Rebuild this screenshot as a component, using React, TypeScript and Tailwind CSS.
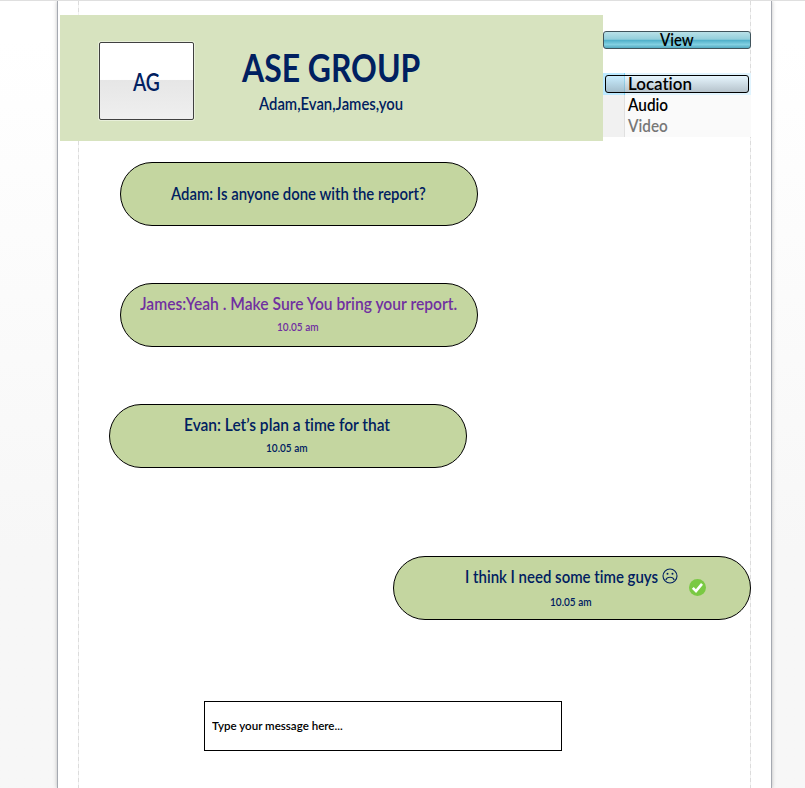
import { useLayoutEffect, useRef, useState } from "react";
import clsx from "clsx";

/** One line of lettering, condensed or widened to fill its box. */
function Line({ text, className }: { text: string; className: string }) {
  const box = useRef<HTMLDivElement>(null);
  const span = useRef<HTMLSpanElement>(null);
  const [scale, setScale] = useState(1);
  useLayoutEffect(() => {
    if (box.current && span.current) {
      setScale(box.current.clientWidth / span.current.offsetWidth);
    }
  }, [text]);
  return (
    <div ref={box} className={clsx("shrink-0 whitespace-nowrap", className)}>
      <span ref={span} className="inline-block origin-left" style={{ transform: `scaleX(${scale})` }}>
        {text}
      </span>
    </div>
  );
}

const bubble =
  "flex h-16 w-[358px] flex-col items-center rounded-[32px] border border-black bg-[#c4d6a0] pr-0.5 text-[#002060]";

function Sad() {
  return (
    <svg className="size-4" viewBox="0 0 16 16" fill="none" stroke="#002060">
      <circle cx="8" cy="8" r="7" strokeWidth="1.1" />
      <circle cx="5.5" cy="5.8" r="1" fill="#002060" stroke="none" />
      <circle cx="10.5" cy="5.8" r="1" fill="#002060" stroke="none" />
      <path d="M3.8 12C5 8.4 11 8.4 12.2 12" strokeWidth="1.1" />
    </svg>
  );
}

function Check() {
  return (
    <svg className="size-[17px]" viewBox="0 0 17 17">
      <circle cx="8.5" cy="8.5" r="8.5" fill="#7ac943" />
      <path d="M3.8 8.9 7 12.1 13 4.9" fill="none" stroke="#fff" strokeWidth="2.6" />
    </svg>
  );
}

const rail =
  "absolute inset-y-0 w-px bg-[repeating-linear-gradient(to_bottom,#dcdcdc_0_4px,#f1f1f1_4px_7px)]";

export default function App() {
  return (
    <div className="flex h-[788px] w-[805px] justify-start overflow-hidden border-t border-[#dfdfdf] bg-linear-to-b from-white from-5% to-[#f7f7f7] to-70% pl-[57px] font-['Lato',sans-serif] font-semibold [font-variant-ligatures:none]">
      <main className="relative h-full w-[715px] shrink-0 border-x border-[#a5a9b1] bg-white shadow-[0_0_4px_rgba(0,0,0,0.25)]">
        <div className={clsx(rail, "left-5")} />
        <div className={clsx(rail, "left-[692px]")} />
        <div className="relative">
          <div className="flex pt-3.5 pl-0.5">
            <header className="flex h-[126px] w-[543px] bg-[#d7e3bf] pt-[27px] pl-[39px] text-[#002060]">
              <div className="flex h-[78px] w-[95px] justify-center rounded-[2px] border border-[#404040] bg-[linear-gradient(#fff_0_48%,#e6e6e6_49%,#efefef_100%)] pt-[21px] pr-px ring-1 ring-[#e8efda]">
                <Line text="AG" className="w-[27px] text-[25px] leading-[34px]" />
              </div>
              <div className="ml-12 flex flex-col items-center">
                <h1>
                  <Line text="ASE GROUP" className="w-[178px] text-[38px] leading-[50px] font-bold" />
                </h1>
                <Line text="Adam,Evan,James,you" className="w-[144px] text-[17px] leading-6" />
              </div>
            </header>
            <nav className="w-[148px] pt-4 text-[18px] text-black">
              <button className="flex h-[18px] w-full justify-center rounded-[3px] border border-[#40545c] bg-[linear-gradient(#b9e1e8_0%,#92cedb_46%,#4caec8_50%,#82d0e2_78%,#53abc1_100%)] leading-[14px]">
                <Line text="View" className="w-[34px]" />
              </button>
              <div className="mt-6 bg-[linear-gradient(to_right,#f1f1f1_0_21px,#e0e0e0_21px_22px,#fafafa_22px)]">
                <div className="h-[22px] bg-[linear-gradient(to_right,#bce9ff_0_21px,#80d5f8_21px_22px,#e1f4fe_22px)] p-0.5">
                  <div className="h-[18px] rounded-[3px] border border-black bg-linear-to-b from-white/20 to-[#8b9299]/50 pl-[22px] leading-[14px]">
                    <Line text="Location" className="w-16" />
                  </div>
                </div>
                <div className="h-[21px] pl-[25px] leading-[19px]">
                  <Line text="Audio" className="w-10" />
                </div>
                <div className="h-[21px] pl-[25px] leading-[19px] text-[#777]">
                  <Line text="Video" className="w-10" />
                </div>
              </div>
            </nav>
          </div>

          <section className="flex flex-col pt-[21px]">
            <article className={clsx(bubble, "ml-[62px] pt-[18px]")}>
              <Line text="Adam: Is anyone done with the report?" className="w-[255px] text-[18px] leading-6" />
            </article>
            <article className={clsx(bubble, "mt-[57px] ml-[62px] pt-[7px]")}>
              <Line
                text="James:Yeah . Make Sure You bring your report."
                className="w-[317px] text-[18px] leading-6 text-[#7030a0]"
              />
              <Line text="10.05 am" className="mt-1 w-[42px] text-[11px] leading-4 text-[#7030a0]" />
            </article>
            <article className={clsx(bubble, "mt-[57px] ml-[51px] pt-[7px]")}>
              <Line text="Evan: Let’s plan a time for that" className="w-[206px] text-[18px] leading-6" />
              <Line text="10.05 am" className="mt-1 w-[42px] text-[11px] leading-4" />
            </article>
            <article className={clsx(bubble, "relative mt-[88px] ml-[335px] pt-[7px]")}>
              <div className="flex gap-1">
                <Line text="I think I need some time guys" className="w-[193px] text-[18px] leading-6" />
                <div className="pt-1">
                  <Sad />
                </div>
              </div>
              <Line text="10.05 am" className="mt-1.5 w-[42px] text-[11px] leading-4" />
              <div className="absolute top-[22px] right-11">
                <Check />
              </div>
            </article>
          </section>

          <div className="mt-[81px] ml-[146px] flex h-[50px] w-[358px] items-center border border-black bg-white pl-[7px] text-black">
            <Line text="Type your message here..." className="w-[131px] text-[12px] leading-4" />
          </div>
        </div>
      </main>
    </div>
  );
}
